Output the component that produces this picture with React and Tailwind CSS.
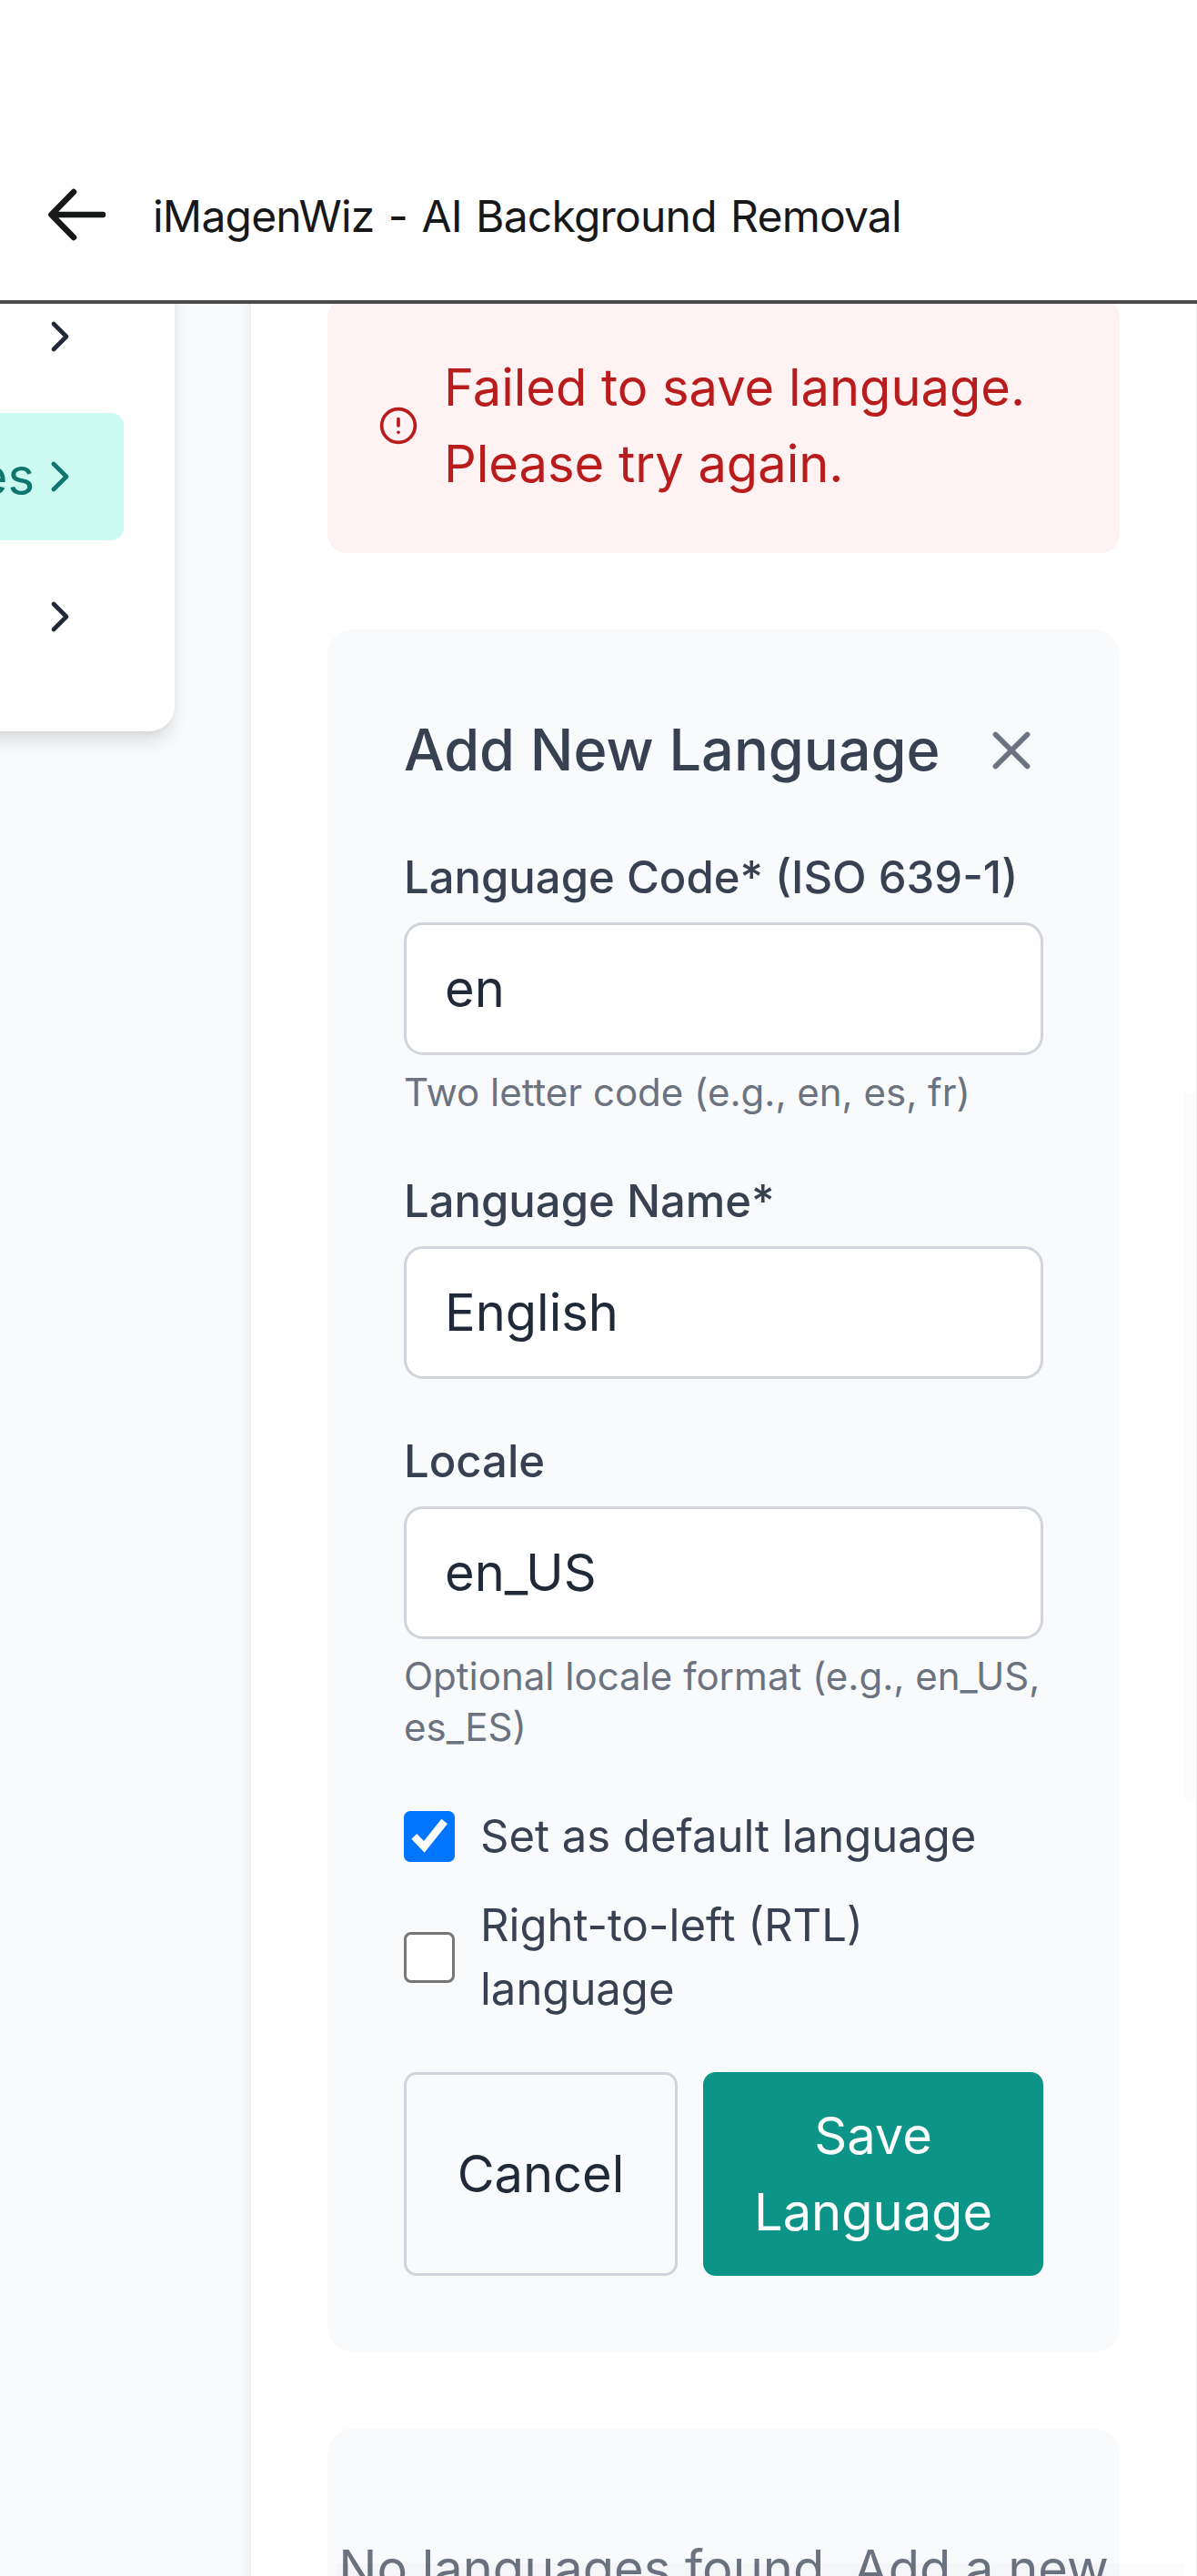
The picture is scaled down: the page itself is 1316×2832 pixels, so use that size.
import { ChevronRight, CircleAlert, X } from "lucide-react";

function Header() {
  return (
    <header className="flex h-[334px] shrink-0 items-center border-b-4 border-[#4b4a4d] bg-white pt-[142px] pl-[52px]">
      <svg width="66" height="60" viewBox="0 0 66 60" fill="none" stroke="#17181a" strokeWidth="6.6" strokeLinecap="round" strokeLinejoin="round">
        <path d="M29 5 L4.5 30 L29 55 M5 30 H61" />
      </svg>
      <h1 className="ml-[50px] pt-[4px] text-[48px] leading-[60px] tracking-[-0.8px] whitespace-nowrap text-[#17181a] [word-spacing:2.6px]">iMagenWiz - AI Background Removal</h1>
    </header>
  );
}

function NavItem({ label, active }) {
  return (
    <a className={`flex h-[140px] items-center justify-end rounded-[14px] pr-[42px] text-[56px] leading-[84px] ${active ? "bg-[#ccfbf1] text-[#0f766e]" : "text-[#1f2937]"}`}>
      <span>{label}</span>
      <ChevronRight size={56} className="shrink-0" />
    </a>
  );
}

function Field({ label, value, hint }) {
  return (
    <div>
      <label className="mb-[14px] block text-[49px] leading-[70px] font-medium whitespace-nowrap text-[#374151]">{label}</label>
      <div className="h-[146px] rounded-[21px] border-3 border-[#d1d5db] bg-white px-[42px] py-[28px] text-[56px] leading-[84px] text-[#1f2937]">{value}</div>
      {hint && <p className="mt-[13px] mb-px text-[42px] leading-[56px] text-[#6b7280]">{hint}</p>}
    </div>
  );
}

function Checkbox({ label, checked }) {
  return (
    <label className="flex items-center gap-[28px] text-[49px] leading-[70px] text-[#374151]">
      {checked ? (
        <span className="size-[56px] shrink-0 rounded-[7px] bg-[#0075ff]">
          <svg width="56" height="56" viewBox="0 0 56 56" fill="#fff">
            <path d="M8.3 30.7 L14.3 25 L22 33 L41.3 8.7 L48 14 L22.7 45.7 Z" />
          </svg>
        </span>
      ) : (
        <span className="size-[56px] shrink-0 rounded-[8px] border-[3.5px] border-[#767676] bg-white" />
      )}
      <span>{label}</span>
    </label>
  );
}

export default function App() {
  return (
    <div className="flex h-[2832px] w-[1316px] flex-col overflow-hidden bg-[#f9fafb] font-['Inter',sans-serif] [font-optical-sizing:none]">
      <Header />
      <div className="relative flex min-h-0 flex-1 items-start gap-[84px] overflow-hidden">
        <nav className="-mt-[34px] -ml-[400px] flex h-[504px] w-[592px] shrink-0 flex-col gap-[14px] rounded-b-[28px] bg-white px-[56px] shadow-[0_14px_21px_-3.5px_rgba(0,0,0,0.1),0_7px_14px_-7px_rgba(0,0,0,0.1)]">
          <NavItem />
          <NavItem label="Languages" active />
          <NavItem />
        </nav>
        <main className="-mt-[90px] w-[1039px] shrink-0 bg-white px-[84px] pt-[84px] pb-[84px] shadow-[0_14px_21px_-3.5px_rgba(0,0,0,0.1),0_7px_14px_-7px_rgba(0,0,0,0.1)]">
          <div className="flex h-[280px] items-center gap-[28px] rounded-[21px] bg-[#fef2f2] px-[56px] text-[#b91c1c]">
            <CircleAlert size={44} className="shrink-0" />
            <p className="text-[56px] leading-[84px]">Failed to save language. Please try again.</p>
          </div>

          <section className="mt-[84px] rounded-[28px] bg-[#f9fafb] p-[84px]">
            <div className="mb-[56px] flex h-[98px] items-center justify-between">
              <h2 className="pb-[2px] text-[63px] leading-[98px] font-medium whitespace-nowrap text-[#374151]">Add New Language</h2>
              <X size={70} className="shrink-0 text-[#6b7280]" />
            </div>
            <div className="flex flex-col gap-[56px]">
              <Field label="Language Code* (ISO 639-1)" value="en" hint="Two letter code (e.g., en, es, fr)" />
              <Field label="Language Name*" value="English" />
              <Field label="Locale" value="en_US" hint="Optional locale format (e.g., en_US, es_ES)" />
              <div className="flex flex-col gap-[28px]">
                <Checkbox label="Set as default language" checked />
                <Checkbox label="Right-to-left (RTL) language" />
              </div>
              <div className="flex h-[224px] gap-[28px] text-[56px] leading-[84px]">
                <button className="w-[301px] shrink-0 rounded-[14px] border-3 border-[#d1d5db] text-[#1f2937]">Cancel</button>
                <button className="flex-1 rounded-[14px] bg-[#0d9488] px-[56px] text-white">Save Language</button>
              </div>
            </div>
          </section>

          <section className="mt-[84px] rounded-[28px] bg-[#f9fafb] py-[112px] text-center text-[56px] leading-[84px] text-[#6b7280]">
            <p>No languages found. Add a new language to get started.</p>
          </section>
        </main>
        {/* Overlay scrollbars */}
        <div className="absolute top-[868px] right-px h-[775px] w-[13px] bg-black/[0.015]" />
        <div className="absolute bottom-0 left-[369px] h-[14px] w-[933px] bg-black/[0.015]" />
      </div>
    </div>
  );
}
